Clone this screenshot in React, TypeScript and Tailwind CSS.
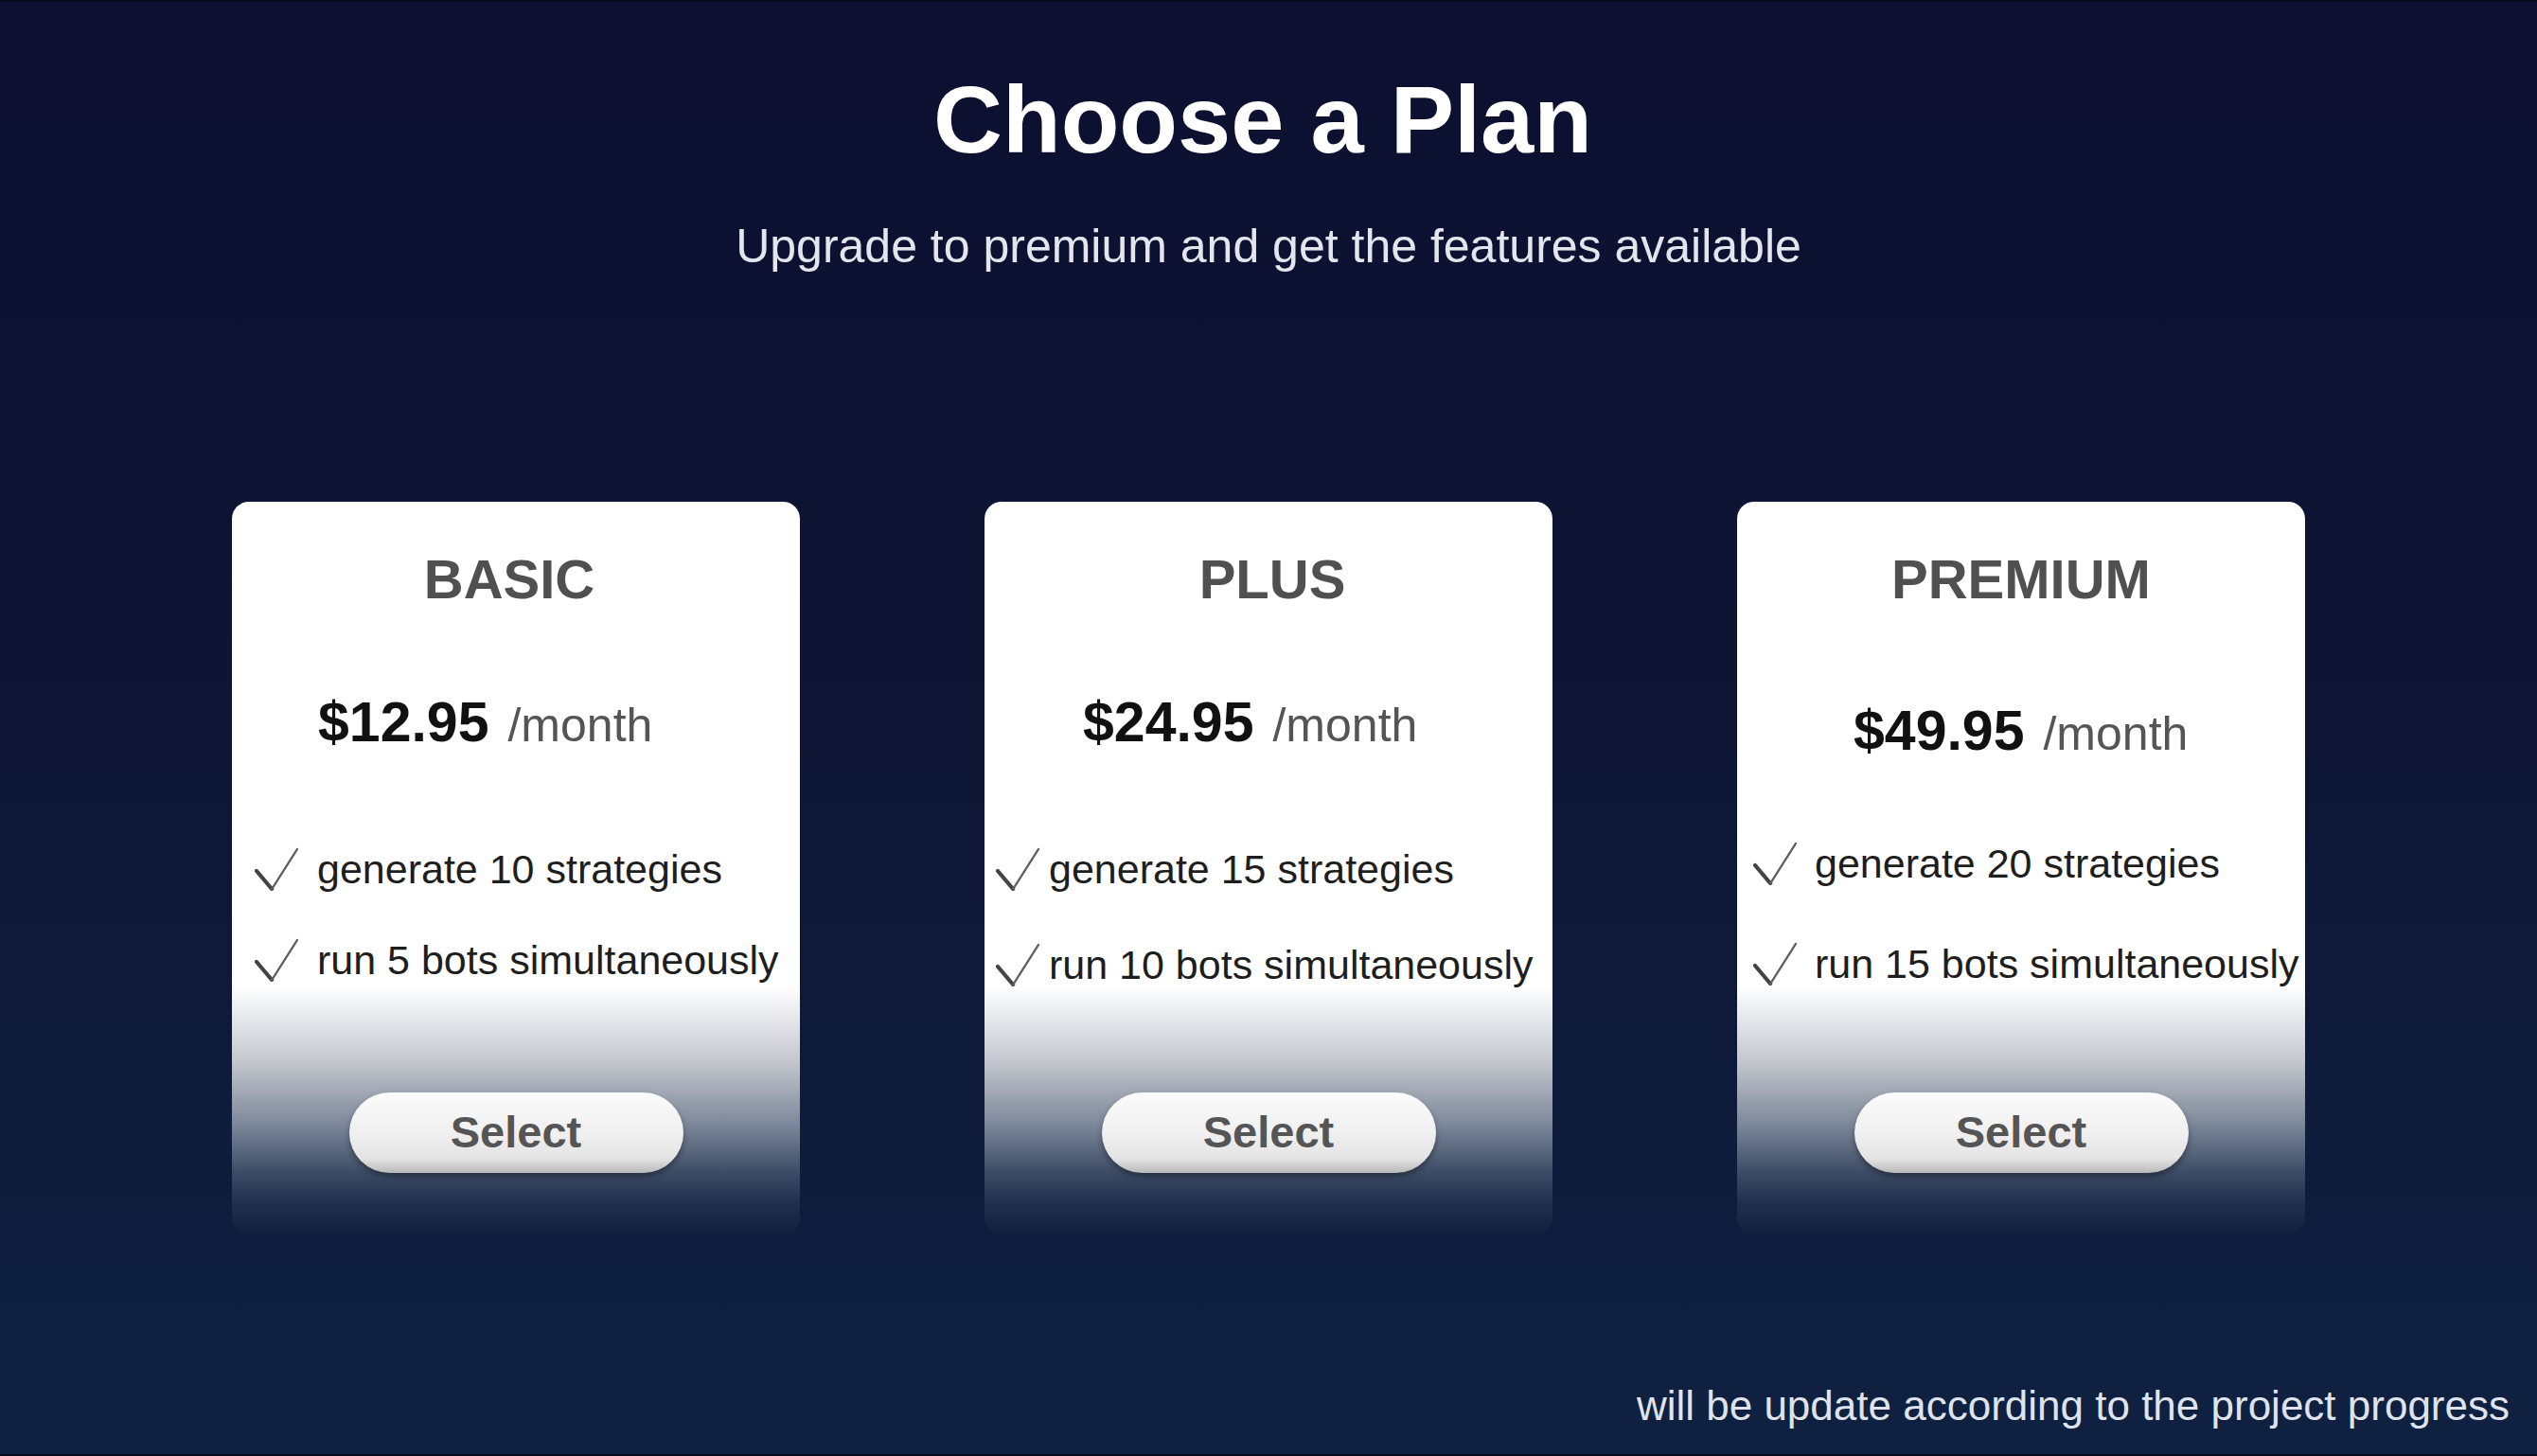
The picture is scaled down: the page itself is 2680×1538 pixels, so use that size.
import React from 'react';

interface Plan {
  name: string;
  price: string;
  features: string[];
  nameClass: string;
  priceClass: string;
  listClass: string;
  rowClass: string;
}

const plans: Plan[] = [
  {
    name: 'BASIC',
    price: '$12.95',
    features: ['generate 10 strategies', 'run 5 bots simultaneously'],
    nameClass: 'pr-[14px]',
    priceClass: 'mt-[93px] pl-[91px]',
    listClass: 'mt-[101px] pl-[24px] gap-[48px]',
    rowClass: 'gap-[20px]',
  },
  {
    name: 'PLUS',
    price: '$24.95',
    features: ['generate 15 strategies', 'run 10 bots simultaneously'],
    nameClass: 'pl-[8px]',
    priceClass: 'mt-[93px] pl-[104px]',
    listClass: 'mt-[101px] pl-[12px] gap-[53px]',
    rowClass: 'gap-[10px]',
  },
  {
    name: 'PREMIUM',
    price: '$49.95',
    features: ['generate 20 strategies', 'run 15 bots simultaneously'],
    nameClass: '',
    priceClass: 'mt-[102px] pl-[123px]',
    listClass: 'mt-[86px] pl-[17px] gap-[58px]',
    rowClass: 'gap-[19px]',
  },
];

const CheckMark = () => (
  <svg width="46" height="46" viewBox="0 0 48 48" className="shrink-0">
    <path d="M2 26 L19 46" stroke="#444" strokeWidth="4.2" strokeLinecap="round" fill="none" />
    <path d="M19 46 L47 2" stroke="#5f5f5f" strokeWidth="2.4" strokeLinecap="round" fill="none" />
  </svg>
);

const PlanCard = ({ plan }: { plan: Plan }) => (
  <div className="w-[600px] h-[774px] rounded-[18px] flex flex-col bg-[linear-gradient(to_bottom,#ffffff_0%,#ffffff_66%,#e2e4e8_71%,#c3c6cc_76.5%,#7c8799_85%,#3d4c66_91.5%,#1e2d4a_96%,#11203d_100%)]">
    <h2 className={`mt-[53px] text-center text-[58px] leading-none font-bold text-[#505050] ${plan.nameClass}`}>
      {plan.name}
    </h2>

    {/* price */}
    <div className={`flex items-baseline gap-[20px] leading-none ${plan.priceClass}`}>
      <span className="text-[59px] font-bold text-[#111]">{plan.price}</span>
      <span className="text-[50px] text-[#555]">/month</span>
    </div>

    {/* features */}
    <ul className={`flex flex-col ${plan.listClass}`}>
      {plan.features.map((f) => (
        <li key={f} className={`flex items-center h-[48px] ${plan.rowClass}`}>
          <CheckMark />
          <span className="text-[43px] leading-none text-[#1e1e1e] whitespace-nowrap">{f}</span>
        </li>
      ))}
    </ul>

    <button className="mt-auto mb-[65px] self-center w-[353px] h-[85px] rounded-full text-[47px] font-bold text-[#555] bg-[linear-gradient(to_bottom,#fbfbfb_0%,#f0f0f0_50%,#e4e4e4_82%,#b9b9b9_100%)] shadow-[0_4px_6px_rgba(0,0,0,0.35)]">
      Select
    </button>
  </div>
);

export default function App() {
  return (
    <div className="h-screen w-full flex flex-col items-center font-['Liberation_Sans',Arial,sans-serif] bg-[linear-gradient(to_bottom,#0d1030_0%,#0e1535_50%,#0f2141_100%)] border-y-2 border-[#070a1a]">
      <h1 className="mt-[74px] pr-[12px] text-[101px] leading-none font-bold text-white">Choose a Plan</h1>
      <p className="mt-[58px] text-[50px] leading-none text-[#e4e6ee]">
        Upgrade to premium and get the features available
      </p>

      <div className="mt-[245px] flex gap-[195px]">
        {plans.map((p) => (
          <PlanCard key={p.name} plan={p} />
        ))}
      </div>

      <p className="mt-auto self-end mr-[29px] mb-[29px] text-[44px] leading-none text-[#dfe3ec]">
        will be update according to the project progress
      </p>
    </div>
  );
}
